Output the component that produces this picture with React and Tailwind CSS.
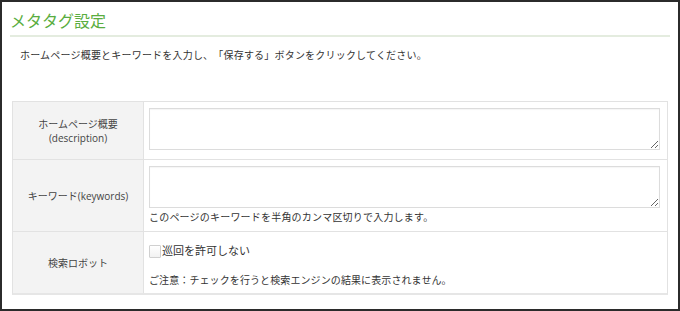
import React from "react";

const font = { fontFamily: '"Open Sans", "Noto Sans CJK JP", sans-serif' };

function Area() {
  return (
    <textarea className="block w-[511px] h-[42px] border border-[#dcdcdc] bg-white shadow-[inset_0_1px_1px_rgba(0,0,0,0.04)] outline-none" />
  );
}

export default function App() {
  return (
    <div
      className="w-[680px] h-[311px] box-border border-2 border-[#2b2b2b] bg-white text-[#333] [text-spacing-trim:space-all]"
      style={font}
    >
      <div className="mx-[8px] pt-[9px] pb-[4px] border-b-2 border-[#e4ecdf]">
        <h1 className="text-[16px] leading-[20px] text-[#5aad40] font-normal">メタタグ設定</h1>
      </div>
      <p className="ml-[18px] mt-[11px] text-[10px] leading-[14px] tracking-[0.2px] text-[#333]">
        ホームページ概要とキーワードを入力し、「保存する」ボタンをクリックしてください。
      </p>
      <div className="ml-[10px] mt-[39px] w-[656px] border border-[#e2e2e2] border-b-2 border-b-[#e6e6e6]">
        <div className="flex h-[58px] border-b border-[#e2e2e2]">
          <div className="w-[131px] shrink-0 bg-[#f3f3f3] border-r border-[#e2e2e2] flex flex-col items-center justify-center text-[10px] leading-[14px] text-[#444]">
            <span>ホームページ概要</span>
            <span>(description)</span>
          </div>
          <div className="pl-[5px] pt-[6px]">
            <Area />
          </div>
        </div>
        <div className="flex h-[72px] border-b border-[#e2e2e2]">
          <div className="w-[131px] shrink-0 bg-[#f3f3f3] border-r border-[#e2e2e2] flex items-center justify-center text-[10px] leading-[14px] text-[#444]">
            <span>キーワード(keywords)</span>
          </div>
          <div className="pl-[5px] pt-[6px]">
            <Area />
            <p className="mt-[2px] text-[10px] leading-[14px] tracking-[0.2px]">
              このページのキーワードを半角のカンマ区切りで入力します。
            </p>
          </div>
        </div>
        <div className="flex h-[61px]">
          <div className="w-[131px] shrink-0 bg-[#f3f3f3] border-r border-[#e2e2e2] flex items-center justify-center text-[10px] leading-[14px] text-[#444]">
            <span>検索ロボット</span>
          </div>
          <div className="pl-[5px] pt-[12px]">
            <div className="flex items-center h-[14px]">
              <span className="inline-block w-[12px] h-[13px] border border-[#d0d0d0] bg-gradient-to-b from-white to-[#f2f2f2] rounded-[1px]" />
              <span className="ml-[1px] text-[11px] leading-[14px]">巡回を許可しない</span>
            </div>
            <p className="mt-[15px] text-[10px] leading-[14px] tracking-[0.1px]">
              ご注意：チェックを行うと検索エンジンの結果に表示されません。
            </p>
          </div>
        </div>
      </div>
    </div>
  );
}
